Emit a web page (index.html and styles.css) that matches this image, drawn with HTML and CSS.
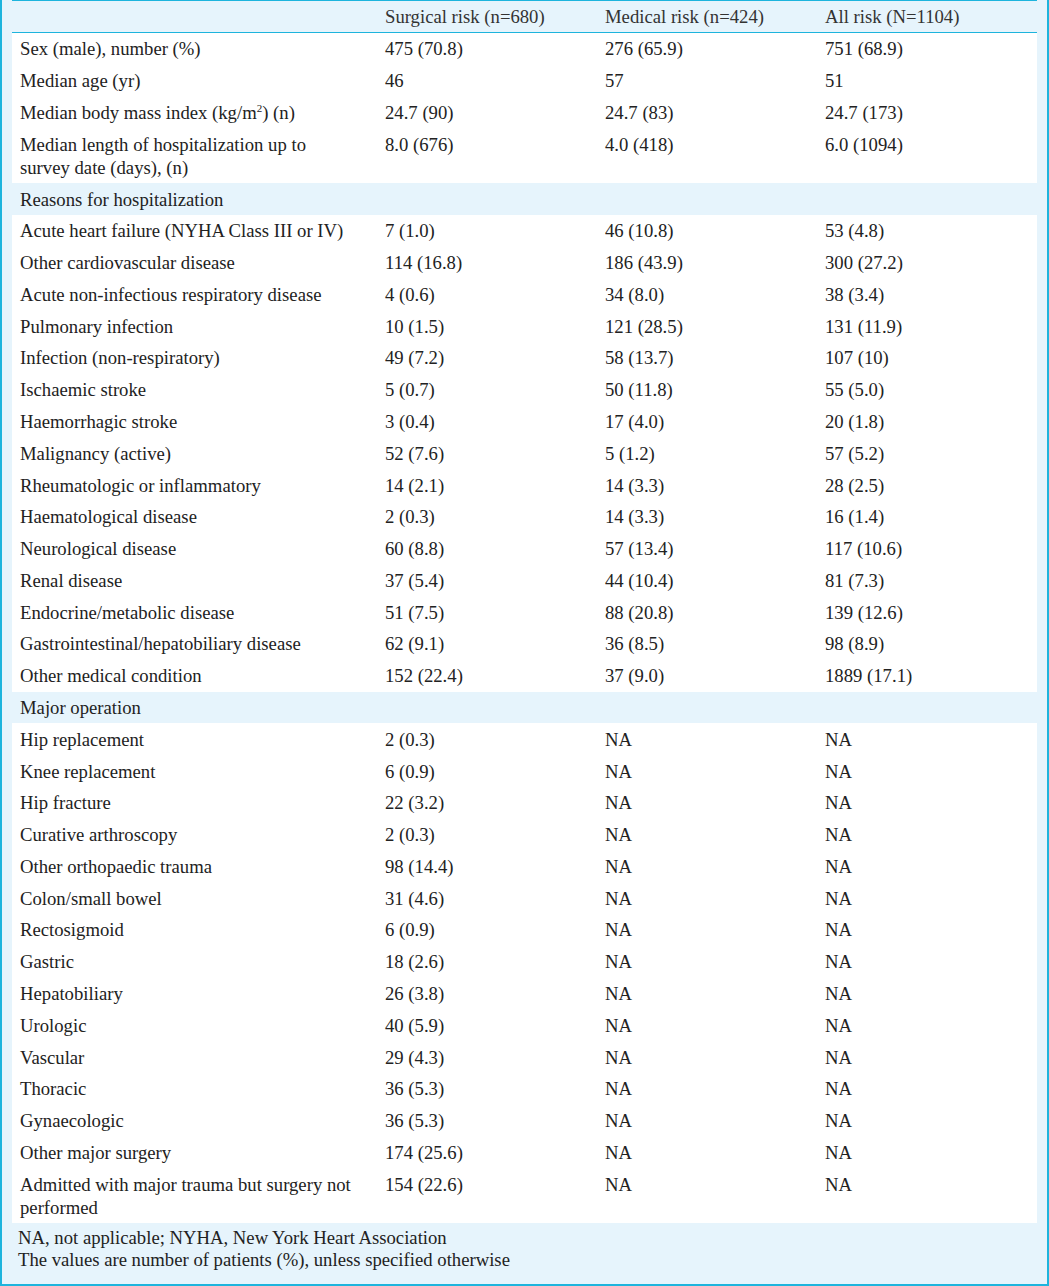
FILE: index.html
```html
<!DOCTYPE html>
<html>
<head>
<meta charset="utf-8">
<link rel="stylesheet" href="styles.css">
</head>
<body>
<div class="wrap">
<table class="tbl">
<colgroup><col class="w1"><col class="w2"><col class="w2"><col class="w2"></colgroup>
<thead>
<tr><th></th><th>Surgical risk (n=680)</th><th>Medical risk (n=424)</th><th>All risk (N=1104)</th></tr>
</thead>
<tbody>
<tr><td>Sex (male), number (%)</td><td>475 (70.8)</td><td>276 (65.9)</td><td>751 (68.9)</td></tr>
<tr><td>Median age (yr)</td><td>46</td><td>57</td><td>51</td></tr>
<tr><td>Median body mass index (kg/m<sup>2</sup>) (n)</td><td>24.7 (90)</td><td>24.7 (83)</td><td>24.7 (173)</td></tr>
<tr><td>Median length of hospitalization up to survey date (days), (n)</td><td>8.0 (676)</td><td>4.0 (418)</td><td>6.0 (1094)</td></tr>
<tr class="sec"><td colspan="4">Reasons for hospitalization</td></tr>
<tr><td>Acute heart failure (NYHA Class III or IV)</td><td>7 (1.0)</td><td>46 (10.8)</td><td>53 (4.8)</td></tr>
<tr><td>Other cardiovascular disease</td><td>114 (16.8)</td><td>186 (43.9)</td><td>300 (27.2)</td></tr>
<tr><td>Acute non-infectious respiratory disease</td><td>4 (0.6)</td><td>34 (8.0)</td><td>38 (3.4)</td></tr>
<tr><td>Pulmonary infection</td><td>10 (1.5)</td><td>121 (28.5)</td><td>131 (11.9)</td></tr>
<tr><td>Infection (non-respiratory)</td><td>49 (7.2)</td><td>58 (13.7)</td><td>107 (10)</td></tr>
<tr><td>Ischaemic stroke</td><td>5 (0.7)</td><td>50 (11.8)</td><td>55 (5.0)</td></tr>
<tr><td>Haemorrhagic stroke</td><td>3 (0.4)</td><td>17 (4.0)</td><td>20 (1.8)</td></tr>
<tr><td>Malignancy (active)</td><td>52 (7.6)</td><td>5 (1.2)</td><td>57 (5.2)</td></tr>
<tr><td>Rheumatologic or inflammatory</td><td>14 (2.1)</td><td>14 (3.3)</td><td>28 (2.5)</td></tr>
<tr><td>Haematological disease</td><td>2 (0.3)</td><td>14 (3.3)</td><td>16 (1.4)</td></tr>
<tr><td>Neurological disease</td><td>60 (8.8)</td><td>57 (13.4)</td><td>117 (10.6)</td></tr>
<tr><td>Renal disease</td><td>37 (5.4)</td><td>44 (10.4)</td><td>81 (7.3)</td></tr>
<tr><td>Endocrine/metabolic disease</td><td>51 (7.5)</td><td>88 (20.8)</td><td>139 (12.6)</td></tr>
<tr><td>Gastrointestinal/hepatobiliary disease</td><td>62 (9.1)</td><td>36 (8.5)</td><td>98 (8.9)</td></tr>
<tr><td>Other medical condition</td><td>152 (22.4)</td><td>37 (9.0)</td><td>1889 (17.1)</td></tr>
<tr class="sec"><td colspan="4">Major operation</td></tr>
<tr><td>Hip replacement</td><td>2 (0.3)</td><td>NA</td><td>NA</td></tr>
<tr><td>Knee replacement</td><td>6 (0.9)</td><td>NA</td><td>NA</td></tr>
<tr><td>Hip fracture</td><td>22 (3.2)</td><td>NA</td><td>NA</td></tr>
<tr><td>Curative arthroscopy</td><td>2 (0.3)</td><td>NA</td><td>NA</td></tr>
<tr><td>Other orthopaedic trauma</td><td>98 (14.4)</td><td>NA</td><td>NA</td></tr>
<tr><td>Colon/small bowel</td><td>31 (4.6)</td><td>NA</td><td>NA</td></tr>
<tr><td>Rectosigmoid</td><td>6 (0.9)</td><td>NA</td><td>NA</td></tr>
<tr><td>Gastric</td><td>18 (2.6)</td><td>NA</td><td>NA</td></tr>
<tr><td>Hepatobiliary</td><td>26 (3.8)</td><td>NA</td><td>NA</td></tr>
<tr><td>Urologic</td><td>40 (5.9)</td><td>NA</td><td>NA</td></tr>
<tr><td>Vascular</td><td>29 (4.3)</td><td>NA</td><td>NA</td></tr>
<tr><td>Thoracic</td><td>36 (5.3)</td><td>NA</td><td>NA</td></tr>
<tr><td>Gynaecologic</td><td>36 (5.3)</td><td>NA</td><td>NA</td></tr>
<tr><td>Other major surgery</td><td>174 (25.6)</td><td>NA</td><td>NA</td></tr>
<tr><td>Admitted with major trauma but surgery not performed</td><td>154 (22.6)</td><td>NA</td><td>NA</td></tr>
</tbody>
</table>
<div class="foot">
<div>NA, not applicable; NYHA, New York Heart Association</div>
<div>The values are number of patients (%), unless specified otherwise</div>
</div>
</div>
</body>
</html>
```
FILE: styles.css
```css
html, body {
  margin: 0;
  padding: 0;
  background: #ffffff;
}
.wrap {
  box-sizing: border-box;
  width: 1049px;
  height: 1286px;
  background: #e6f4fc;
  border: 2px solid #1db4dd;
  border-top: none;
  padding: 0 10px;
  font-family: "Liberation Serif", "Times New Roman", serif;
  font-size: 18.7px;
  color: #222;
}
.tbl {
  width: 1025px;
  border-collapse: collapse;
  border-top: 1px solid #1db4dd;
  table-layout: fixed;
}
.w1 {
  width: 365px;
}
.w2 {
  width: 220px;
}
.tbl th {
  font-weight: normal;
  text-align: left;
  background: #e6f4fc;
  color: #333;
  border-bottom: 1px solid #1db4dd;
  padding: 4px 8px 4px 8px;
  line-height: 23px;
}
.tbl td {
  background: #fff;
  padding: 4.4px 8px;
  line-height: 23px;
  vertical-align: top;
}
.tbl td:first-child {
  padding-right: 20px;
}
.tbl tr.sec td {
  background: #e6f4fc;
}
.tbl sup {
  font-size: 11px;
  line-height: 0;
  vertical-align: 7px;
}
.foot {
  padding: 4px 6px;
  line-height: 22px;
}
```
